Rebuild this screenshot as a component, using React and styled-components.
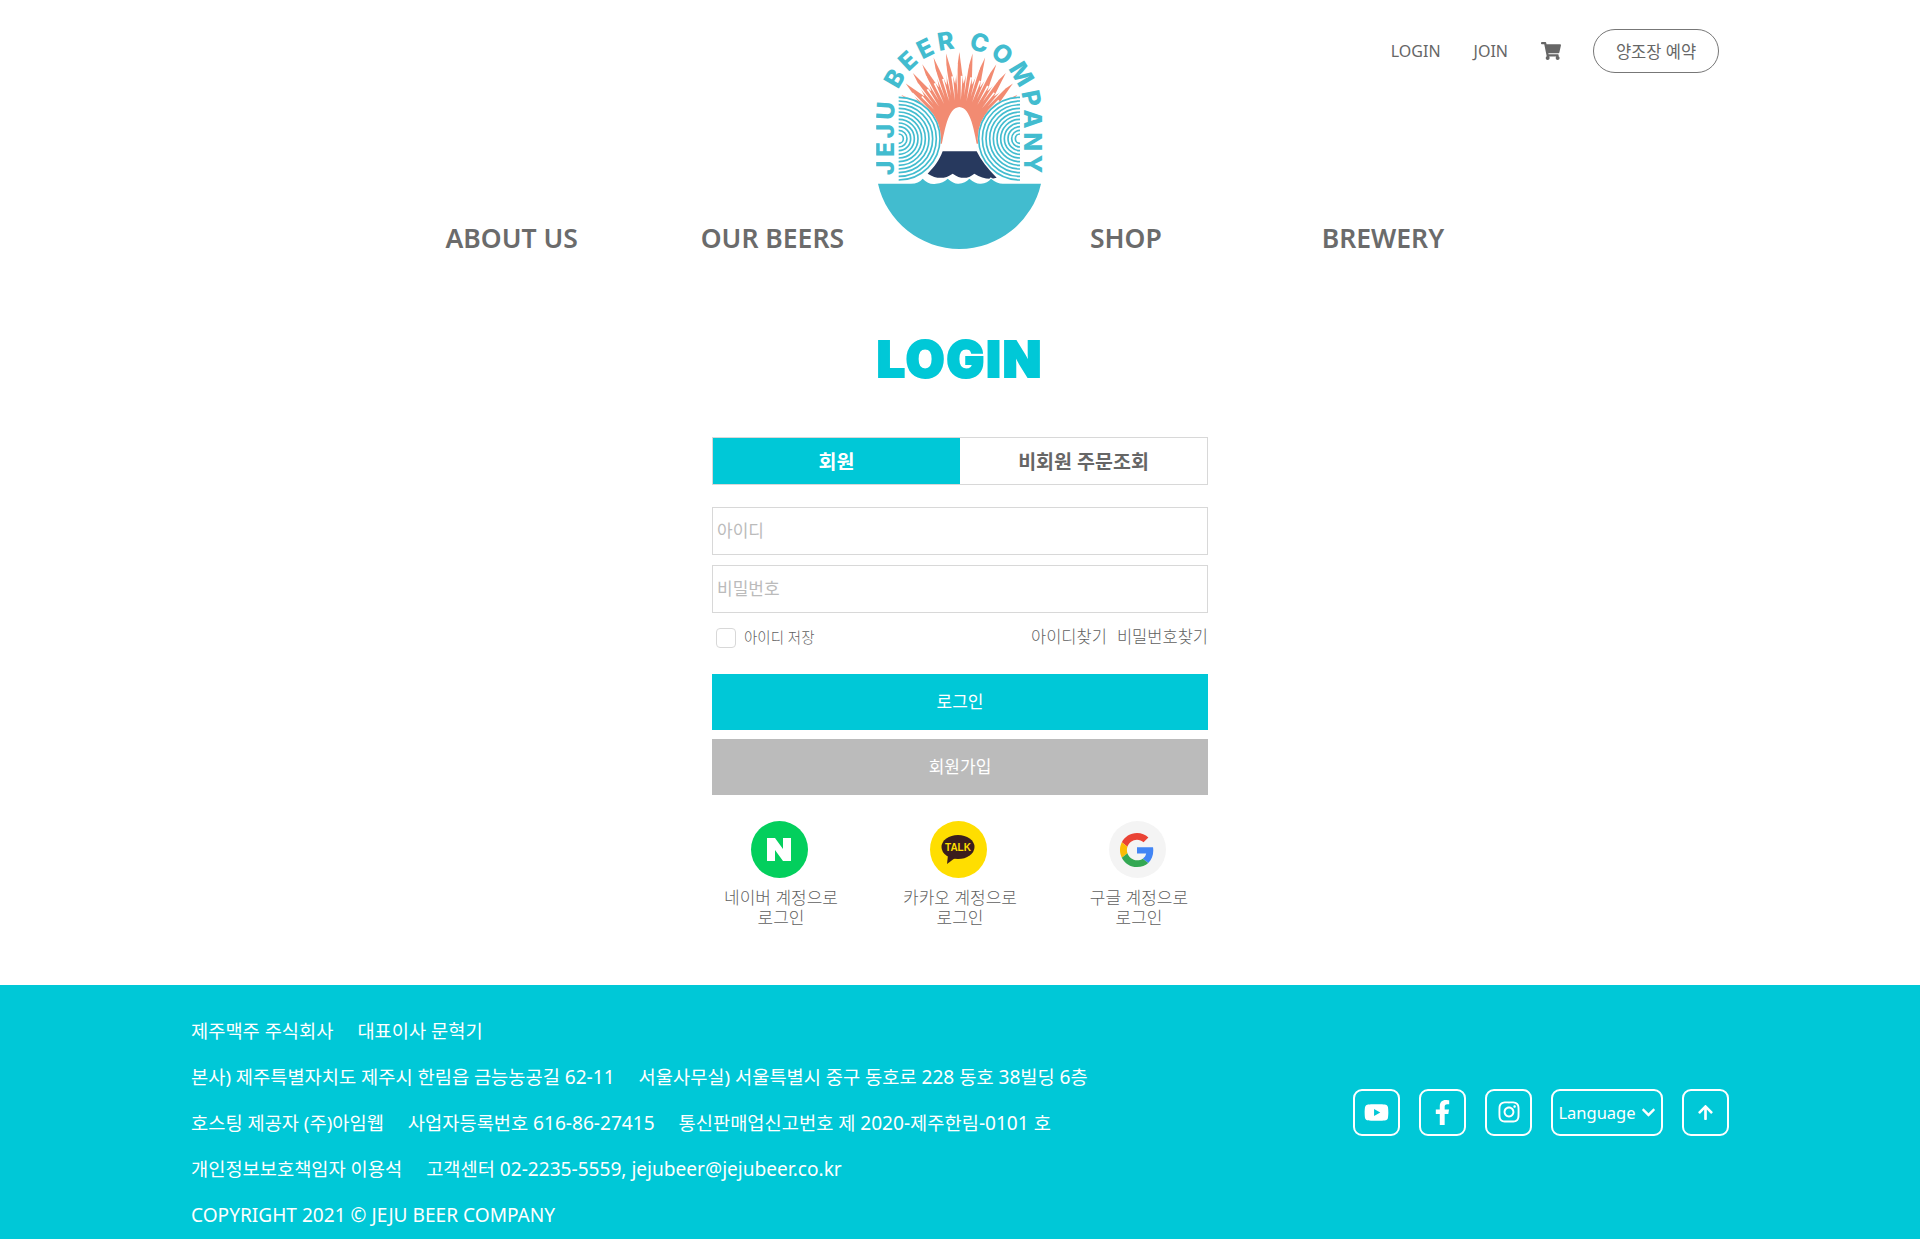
import React from "react";
import styled, { createGlobalStyle } from "styled-components";
import { FaShoppingCart, FaYoutube, FaFacebookF, FaInstagram, FaArrowUp, FaChevronDown } from "react-icons/fa";

const CYAN = "#00c8d7";
const TEAL = "#42bccf";
const CORAL = "#f28b72";
const NAVY = "#27395e";

const GlobalStyle = createGlobalStyle`
  body {
    margin: 0;
    background: #fff;
    color: #666;
    font-family: "Noto Sans", "Noto Sans CJK KR", sans-serif;
  }
  * { box-sizing: border-box; }
`;

const Header = styled.header`
  display: grid;
  grid-template-columns: 1fr 168px 1fr;
  height: 255px;
`;

const LeftNav = styled.nav`
  display: flex;
  justify-content: flex-end;
  align-items: flex-end;
  gap: 123px;
  padding-right: 32px;
`;

const RightCol = styled.div`
  display: flex;
  flex-direction: column;
  justify-content: space-between;
`;

const Utility = styled.div`
  display: flex;
  justify-content: flex-end;
  align-items: center;
  height: 44px;
  margin-top: 29px;
  padding-right: 201px;
  font-size: 16px;
`;

const UtilLink = styled.a`
  margin-right: 33px;
  color: #666;
`;

const CartIcon = styled(FaShoppingCart)`
  width: 20px;
  height: 18px;
  margin-right: 32px;
  color: #666;
`;

const ReserveButton = styled.a`
  display: flex;
  justify-content: center;
  align-items: center;
  width: 126px;
  height: 44px;
  border: 1px solid #777;
  border-radius: 22px;
  font-size: 16.5px;
  color: #666;
`;

const RightNav = styled.nav`
  display: flex;
  gap: 160px;
  padding-left: 46px;
`;

const NavItem = styled.a`
  font-size: 26.5px;
  font-weight: 600;
  line-height: 34px;
  color: #6b6b6b;
`;

const LogoWrap = styled.svg`
  display: block;
  width: 168px;
  height: 225px;
  margin-top: 27px;
`;

const Main = styled.main`
  display: flex;
  flex-direction: column;
  align-items: center;
  height: 730px;
  padding-top: 79px;
`;

const Title = styled.h1`
  margin: 0;
  font-family: Inter, "Liberation Sans", sans-serif;
  font-size: 50px;
  font-weight: 900;
  line-height: 50px;
  letter-spacing: 2px;
  color: ${CYAN};
  -webkit-text-stroke: 2px ${CYAN};
`;

const Form = styled.form`
  display: flex;
  flex-direction: column;
  width: 496px;
  margin-top: 53px;
`;

const Tabs = styled.div`
  display: grid;
  grid-template-columns: 1fr 1fr;
  height: 48px;
  border: 1px solid #d8d8d8;
  margin-bottom: 22px;
`;

const Tab = styled.div`
  display: flex;
  justify-content: center;
  align-items: center;
  padding-bottom: 2px;
  font-size: 19.5px;
  font-weight: 700;
  background: ${(p) => (p.$active ? CYAN : "#fff")};
  color: ${(p) => (p.$active ? "#fff" : "#666")};
`;

const Input = styled.input`
  height: 48px;
  margin-bottom: 10px;
  padding: 0 4px 2px;
  border: 1px solid #d8d8d8;
  border-radius: 0;
  font: inherit;
  font-size: 17px;
  outline: none;

  &::placeholder {
    color: #bbb;
    opacity: 1;
  }
`;

const OptionRow = styled.div`
  display: flex;
  justify-content: space-between;
  align-items: center;
  height: 24px;
  margin-top: 1px;
  margin-bottom: 26px;
  font-weight: 300;
  color: #5f5f5f;
`;

const SaveId = styled.label`
  display: flex;
  align-items: center;
  gap: 8px;
  padding-left: 4px;
  font-size: 14.5px;
`;

const CheckBox = styled.span`
  display: block;
  width: 20px;
  height: 20px;
  margin-top: 4px;
  border: 1px solid #d8d8d8;
  border-radius: 4px;
`;

const FindLinks = styled.div`
  display: flex;
  gap: 10px;
  font-size: 16.5px;
`;

const WideButton = styled.button`
  height: 56px;
  margin-bottom: 9px;
  padding-bottom: 4px;
  border: 0;
  background: ${(p) => p.$bg};
  color: #fff;
  font: inherit;
  font-size: 17px;
`;

const Socials = styled.div`
  display: flex;
  justify-content: center;
  gap: 59px;
  margin-top: 17px;
`;

const Social = styled.a`
  display: flex;
  flex-direction: column;
  align-items: center;
  width: 120px;
  font-size: 17px;
  font-weight: 300;
  line-height: 19.5px;
  text-align: center;
  white-space: nowrap;
  color: #5f5f5f;
`;

const SocialCircle = styled.span`
  display: flex;
  justify-content: center;
  align-items: center;
  width: 57px;
  height: 57px;
  margin-right: 4px;
  margin-bottom: 10px;
  border-radius: 50%;
  background: ${(p) => p.$bg};
`;

const Footer = styled.footer`
  display: flex;
  justify-content: space-between;
  align-items: center;
  height: 254px;
  padding: 0 191px;
  background: ${CYAN};
  color: #fff;
`;

const FooterInfo = styled.div`
  padding-top: 22px;
  font-size: 18.7px;
  font-weight: 400;
`;

const InfoLine = styled.p`
  display: flex;
  gap: 24px;
  margin: 0;
  line-height: 46px;
`;

const LatinRun = styled.span`
  font-size: 19.1px;
`;

const FooterActions = styled.div`
  display: flex;
  gap: 19px;
`;

const Action = styled.a`
  display: flex;
  justify-content: center;
  align-items: center;
  gap: 5px;
  width: ${(p) => p.$w || 47}px;
  height: 47px;
  border: 2px solid #fff;
  border-radius: 9px;
  color: #fff;
  font-size: 16.5px;

  svg {
    flex: none;
  }
`;

const LogoText = styled.text`
  font-family: Inter, sans-serif;
  font-size: 74px;
  font-weight: 800;
  letter-spacing: 11px;
  fill: ${TEAL};
`;

const TalkText = styled.text`
  font-family: "Liberation Sans", sans-serif;
  font-size: 10px;
  font-weight: 700;
  fill: #ffde00;
`;

const pt = (r, deg) => {
  const a = (deg * Math.PI) / 180;
  return `${360 + r * Math.sin(a)},${380 - r * Math.cos(a)}`;
};

const spike = (deg, tip, base, half) =>
  `${pt(tip, deg)} ${pt(base, deg - half)} ${pt(base, deg + half)}`;

const outerAngles = Array.from({ length: 13 }, (_, i) => -54 + i * 9);
const slitAngles = Array.from({ length: 26 }, (_, i) => -56.25 + i * 4.5);
const tipRadius = (deg) => 255 - 40 * (deg / 54) ** 2;
const ringRadii = Array.from({ length: 11 }, (_, i) => 14 + i * 11);

function Logo() {
  return (
    <LogoWrap viewBox="110 50 504 675">
      <defs>
        <path id="logo-arc" d="M165 495 L165 310 A195 195 0 0 1 555 310 L555 520" />
      </defs>
      {outerAngles.map((a) => (
        <polygon key={a} points={spike(a, tipRadius(a), 160, 4.5)} fill={CORAL} />
      ))}
      <path d="M198 400 V380 A162 162 0 0 1 522 380 V400 Z" fill={CORAL} />
      {slitAngles.map((a, i) => (
        <polygon
          key={a}
          points={spike(a, i % 2 ? 110 : 125, tipRadius(a) * (i % 2 ? 0.72 : 0.86), 0.9)}
          fill="#fff"
        />
      ))}
      <circle cx="178" cy="385" r="127" fill="#fff" />
      <circle cx="542" cy="385" r="127" fill="#fff" />
      {ringRadii.map((r) => (
        <g key={r} fill="none" stroke={TEAL} strokeWidth="5">
          <path d={`M178 ${385 - r} A${r} ${r} 0 0 1 178 ${385 + r}`} />
          <path d={`M542 ${385 - r} A${r} ${r} 0 0 0 542 ${385 + r}`} />
        </g>
      ))}
      <path d="M302 430 C316 360 325 292 360 290 C395 292 404 360 418 430 Z" fill="#fff" />
      <path
        d="M310 423 L412 423 C425 450 445 475 472 502 Q440 512 405 490 Q375 515 340 490 Q305 515 265 490 C285 470 300 450 310 423 Z"
        fill={NAVY}
      />
      <path
        d="M116 520 H215 Q238 520 250 505 Q270 525 290 520 Q312 518 325 505 Q345 522 358 520 Q378 518 390 505 Q410 522 425 520 Q445 518 455 505 Q475 522 495 520 H605 A250.6 250.6 0 0 1 116 520 Z"
        fill={TEAL}
        stroke="#fff"
        strokeWidth="6"
        paintOrder="stroke"
      />
      <LogoText>
        <textPath href="#logo-arc">JEJU BEER COMPANY</textPath>
      </LogoText>
    </LogoWrap>
  );
}

function NaverMark() {
  return (
    <svg width="24" height="23" viewBox="0 0 24 23">
      <polygon points="0,0 8,0 16,11 16,0 24,0 24,23 16,23 8,12 8,23 0,23" fill="#fff" />
    </svg>
  );
}

function KakaoMark() {
  return (
    <svg width="34" height="30" viewBox="0 0 34 30">
      <ellipse cx="17" cy="12" rx="16.5" ry="12" fill="#3a1d1d" />
      <path d="M7 20 L6 29 L14 23 Z" fill="#3a1d1d" />
      <TalkText x="17" y="15.5" textAnchor="middle">TALK</TalkText>
    </svg>
  );
}

function GoogleMark() {
  return (
    <svg width="34" height="34" viewBox="0 0 48 48">
      <path fill="#EA4335" d="M24 9.5c3.54 0 6.71 1.22 9.21 3.6l6.85-6.85C35.9 2.38 30.47 0 24 0 14.62 0 6.51 5.38 2.56 13.22l7.98 6.19C12.43 13.72 17.74 9.5 24 9.5z" />
      <path fill="#4285F4" d="M46.98 24.55c0-1.57-.15-3.09-.38-4.55H24v9.02h12.94c-.58 2.96-2.26 5.48-4.78 7.18l7.73 6c4.51-4.18 7.09-10.36 7.09-17.65z" />
      <path fill="#FBBC05" d="M10.53 28.59c-.48-1.45-.76-2.99-.76-4.59s.27-3.14.76-4.59l-7.98-6.19C.92 16.46 0 20.12 0 24c0 3.88.92 7.54 2.56 10.78l7.97-6.19z" />
      <path fill="#34A853" d="M24 48c6.48 0 11.93-2.13 15.89-5.81l-7.73-6c-2.15 1.45-4.92 2.3-8.16 2.3-6.26 0-11.57-4.22-13.47-9.91l-7.98 6.19C6.51 42.62 14.62 48 24 48z" />
    </svg>
  );
}

const infoLines = [
  ["제주맥주 주식회사", "대표이사 문혁기"],
  ["본사) 제주특별자치도 제주시 한림읍 금능농공길 62-11", "서울사무실) 서울특별시 중구 동호로 228 동호 38빌딩 6층"],
  ["호스팅 제공자 (주)아임웹", "사업자등록번호 616-86-27415", "통신판매업신고번호 제 2020-제주한림-0101 호"],
  ["개인정보보호책임자 이용석", "고객센터 02-2235-5559, jejubeer@jejubeer.co.kr"],
  ["COPYRIGHT 2021 © JEJU BEER COMPANY"],
];

// the latin part of these lines sets larger than the hangul
const splitLatin = (text) =>
  text.split(/([A-Za-z0-9@.,©-][A-Za-z0-9@.,© -]*)/).map((part, i) =>
    i % 2 ? <LatinRun key={i}>{part}</LatinRun> : part
  );

export default function App() {
  return (
    <>
      <GlobalStyle />
      <Header>
        <LeftNav>
          <NavItem>ABOUT US</NavItem>
          <NavItem>OUR BEERS</NavItem>
        </LeftNav>
        <Logo />
        <RightCol>
          <Utility>
            <UtilLink>LOGIN</UtilLink>
            <UtilLink>JOIN</UtilLink>
            <CartIcon />
            <ReserveButton>양조장 예약</ReserveButton>
          </Utility>
          <RightNav>
            <NavItem>SHOP</NavItem>
            <NavItem>BREWERY</NavItem>
          </RightNav>
        </RightCol>
      </Header>

      <Main>
        <Title>LOGIN</Title>
        <Form>
          <Tabs>
            <Tab $active>회원</Tab>
            <Tab>비회원 주문조회</Tab>
          </Tabs>
          <Input placeholder="아이디" />
          <Input placeholder="비밀번호" />
          <OptionRow>
            <SaveId>
              <CheckBox />
              아이디 저장
            </SaveId>
            <FindLinks>
              <span>아이디찾기</span>
              <span>비밀번호찾기</span>
            </FindLinks>
          </OptionRow>
          <WideButton type="button" $bg={CYAN}>로그인</WideButton>
          <WideButton type="button" $bg="#bbb">회원가입</WideButton>
          <Socials>
            <Social>
              <SocialCircle $bg="#03cf5d"><NaverMark /></SocialCircle>
              네이버 계정으로<br />로그인
            </Social>
            <Social>
              <SocialCircle $bg="#ffde00"><KakaoMark /></SocialCircle>
              카카오 계정으로<br />로그인
            </Social>
            <Social>
              <SocialCircle $bg="#f4f4f4"><GoogleMark /></SocialCircle>
              구글 계정으로<br />로그인
            </Social>
          </Socials>
        </Form>
      </Main>

      <Footer>
        <FooterInfo>
          {infoLines.map((line) => (
            <InfoLine key={line[0]}>
              {line.map((item) => (
                <span key={item}>{splitLatin(item)}</span>
              ))}
            </InfoLine>
          ))}
        </FooterInfo>
        <FooterActions>
          <Action><FaYoutube size={25} /></Action>
          <Action><FaFacebookF size={25} /></Action>
          <Action><FaInstagram size={24} /></Action>
          <Action $w={112}>
            Language
            <FaChevronDown size={15} />
          </Action>
          <Action><FaArrowUp size={17} /></Action>
        </FooterActions>
      </Footer>
    </>
  );
}
